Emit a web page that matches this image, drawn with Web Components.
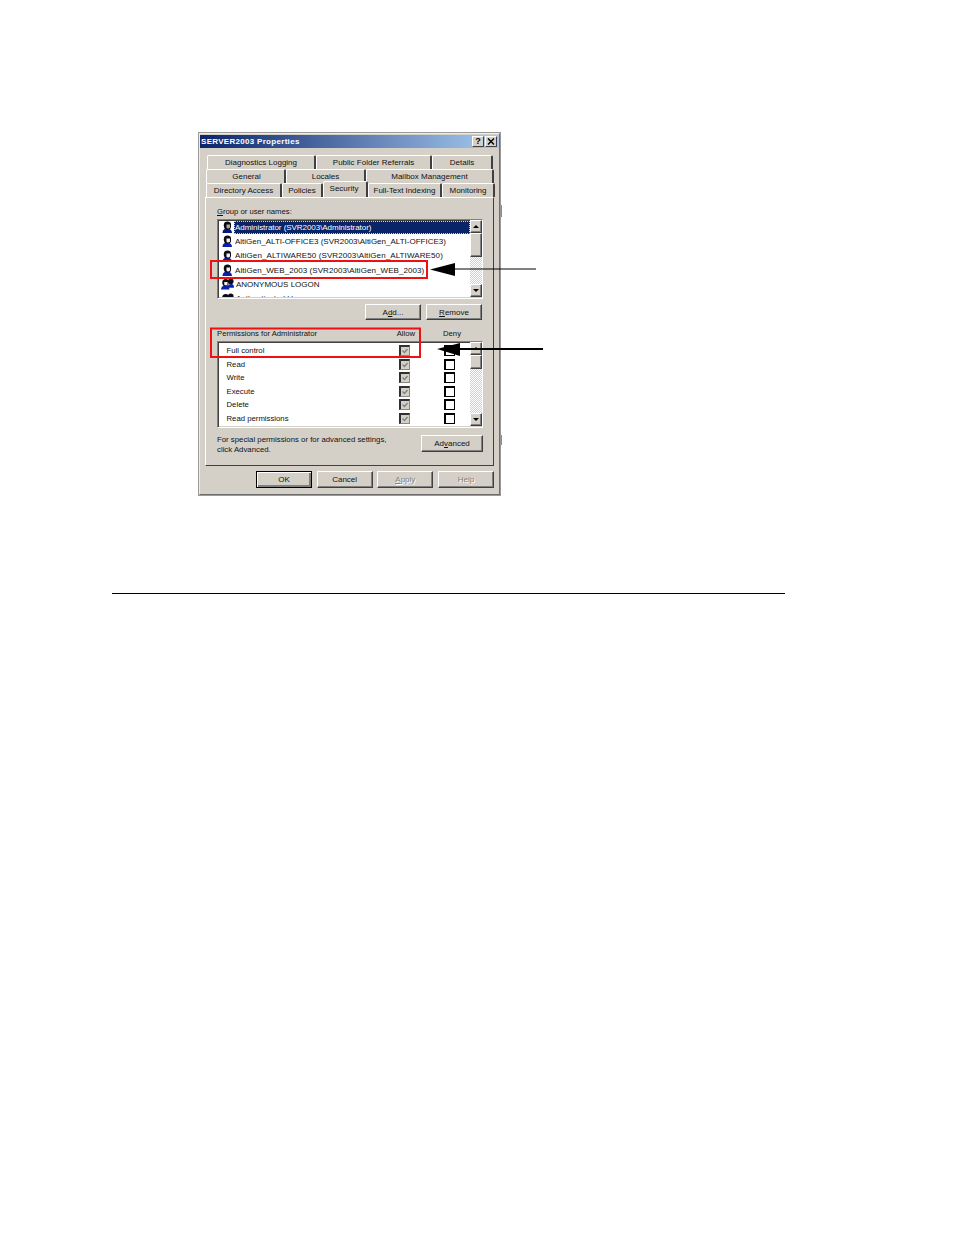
<!DOCTYPE html>
<html>
<head>
<meta charset="utf-8">
<title>SERVER2003 Properties</title>
<style>
  html, body { margin: 0; background: #fff; }
  body { font-family: "Liberation Sans", Arial, sans-serif; }
</style>
</head>
<body>

<template id="user-icon">
  <style>:host { display: inline-block; width: 11px; height: 12px; flex: none; } svg { display: block; }</style>
  <svg width="11" height="12" viewBox="0 0 11 12">
    <path d="M0.500 12 C0.500 9 2 7.500 5 7.500 C8 7.500 10 9 10 12 Z" fill="#0a1fb0"/>
    <path d="M2.500 1.500 C4.500 -0.300 9 0 9 3 L9 6 C9 8 7 8.500 6 8.500 L3 8 C1.500 6 1.500 3 2.500 1.500 Z" fill="#0c0c14"/>
    <path d="M4.500 3.500 L8 3.500 L8 6.500 C7 8 5 7.600 4.500 6.500 Z" fill="#f4f0e8"/>
  </svg>
</template>

<template id="group-icon">
  <style>:host { display: inline-block; width: 13px; height: 12px; flex: none; margin-left: -1px; } svg { display: block; }</style>
  <svg width="13" height="12" viewBox="0 0 14 12">
    <path d="M7 10 C7 7 9 6 11 6 C13 6 14 7 14 10 Z" fill="#0a1fb0"/>
    <circle cx="10.500" cy="3.200" r="3" fill="#0c0c14"/>
    <path d="M0 12 C0 9 2 7.500 5 7.500 C8 7.500 9 9 9 12 Z" fill="#0a1fb0"/>
    <path d="M2 2 C4 0 8 0 8 3 L8 6 C8 8 6 8.500 5 8.500 L2.500 8 C1 6 1 3.500 2 2 Z" fill="#0c0c14"/>
    <path d="M3.500 3.800 L7 3.800 L7 6.500 C6 8 4 7.600 3.500 6.500 Z" fill="#f4f0e8"/>
  </svg>
</template>

<template id="win-button">
  <style>
    :host {
      display: inline-flex; align-items: center; justify-content: center;
      box-sizing: border-box; height: 17px; background: #d4d0c8; color: #111;
      font-size: 8px;
      border: 1px solid; border-color: #fff #404040 #404040 #fff;
      box-shadow: inset -1px -1px 0 #808080;
    }
    :host([default]) { border-color: #000; box-shadow: inset 1px 1px 0 #fff, inset -2px -2px 0 #808080; }
    :host([disabled]) { color: #808080; text-shadow: 1px 1px 0 #fff; }
    u { text-decoration-thickness: 1px; }
  </style>
  <slot></slot>
</template>

<template id="win-scrollbar">
  <style>
    :host {
      display: flex; flex-direction: column; width: 12px; flex: none; box-sizing: border-box;
      background-color: #fff;
      background-image: conic-gradient(#d4d0c8 25%, #fff 0 50%, #d4d0c8 0 75%, #fff 0);
      background-size: 2px 2px;
    }
    .btn, .thumb {
      box-sizing: border-box; background: #d4d0c8; flex: none;
      border: 1px solid; border-color: #fff #404040 #404040 #fff;
      box-shadow: inset -1px -1px 0 #808080;
    }
    .btn { height: 13px; display: flex; align-items: center; justify-content: center; }
    .thumb { height: var(--thumb, 24px); }
    .track { flex: 1; }
    .up, .down { width: 0; height: 0; border: 3px solid transparent; }
    .up { border-bottom: 3px solid #000; border-top-width: 0; }
    .down { border-top: 3px solid #000; border-bottom-width: 0; }
  </style>
  <div class="btn"><div class="up"></div></div>
  <div class="thumb"></div>
  <div class="track"></div>
  <div class="btn"><div class="down"></div></div>
</template>

<template id="win-listbox">
  <style>
    :host {
      display: flex; box-sizing: border-box; background: #fff;
      border: 1px solid; border-color: #808080 #fff #fff #808080;
      box-shadow: inset 1px 1px 0 #404040, inset -1px -1px 0 #d4d0c8;
      padding: 0 0 1px 2px;
    }
    .rows { flex: 1; min-width: 0; overflow: hidden; padding-top: var(--rows-top, 0); }
  </style>
  <div class="rows"><slot></slot></div>
  <slot name="bar"></slot>
</template>

<template id="user-row">
  <style>
    :host { display: flex; align-items: center; height: 14.300px; padding-left: 2px; font-size: 8px; white-space: nowrap; color: #111; }
    .text { margin-left: 1px; padding: 0 1px; height: 13px; line-height: 13px; flex: none; }
    :host([selected]) .text { flex: 1; background: #0a246a; color: #fff; outline: 1px dotted #d4d0c8; outline-offset: -1px; }
    :host([selected]) ::slotted([slot=icon]) { filter: brightness(0.7); }
  </style>
  <slot name="icon"></slot>
  <span class="text"><slot></slot></span>
</template>

<template id="perm-row">
  <style>
    :host {
      display: grid; grid-template-columns: 1fr 11px 11px; column-gap: 34px; align-items: center;
      height: 13.500px; padding: 0 15px 0 6.500px; font-size: 7.750px; color: #111;
    }
    .box { box-sizing: border-box; width: 11px; height: 11px; display: block; background: #fff; }
    .box.allow { background: #d4d0c8; border: 2px solid; border-color: #303030 #888 #888 #303030; border-right-width: 1px; border-bottom-width: 1px; }
    .box.allow svg { display: block; }
    .box.deny { border: 2px solid #000; border-right-width: 1px; border-bottom-width: 1px; }
  </style>
  <span><slot></slot></span>
  <span class="box allow"><svg width="8" height="8" viewBox="0 0 8 8"><path d="M1.500 3.500 L3.500 5.500 L6.500 2" fill="none" stroke="#808080" stroke-width="1.300"/></svg></span>
  <span class="box deny"></span>
</template>

<template id="win-tab">
  <style>
    :host {
      display: flex; align-items: center; justify-content: center; box-sizing: border-box;
      height: 14px; padding-bottom: 1px; font-size: 8px; background: #d4d0c8; color: #111; white-space: nowrap;
      border-top: 1px solid #fff; border-left: 1px solid #fff; border-right: 2px solid #404040;
      border-top-left-radius: 2px; border-top-right-radius: 2px;
    }
    :host([active]) { height: 16px; margin-top: -2px; margin-bottom: -1px; position: relative; z-index: 1; padding-bottom: 3px; }
  </style>
  <slot></slot>
</template>

<template id="tab-row">
  <style>
    :host { display: flex; height: 14px; box-sizing: border-box; padding-left: var(--indent, 1px); }
    ::slotted(*) { flex: none; }
  </style>
  <slot></slot>
</template>

<template id="title-bar">
  <style>
    :host {
      display: flex; align-items: center; height: 13px; padding: 0 2px 0 1px;
      background: linear-gradient(90deg, #0a246a, #a6caf0);
      color: #fff; font-size: 8px; font-weight: 700; letter-spacing: 0.300px;
    }
    .t { flex: 1; }
    .b {
      box-sizing: border-box; width: 12px; height: 11px; background: #d4d0c8;
      color: #000; font-size: 9px; line-height: 9px; text-align: center; letter-spacing: 0;
      border: 1px solid; border-color: #fff #404040 #404040 #fff;
      display: flex; align-items: center; justify-content: center;
    }
    .close { margin-left: 1px; }
    svg { display: block; }
  </style>
  <span class="t"><slot></slot></span>
  <span class="b">?</span>
  <span class="b close"><svg width="8" height="7" viewBox="0 0 8 7"><path d="M1 0.500 L7 6.500 M7 0.500 L1 6.500" stroke="#000" stroke-width="1.400"/></svg></span>
</template>

<template id="props-dialog">
  <style>
    :host {
      display: block; box-sizing: border-box; width: 303px; height: 364px;
      background: #d4d0c8; padding: 1px 0 0;
      border: 2px solid; border-color: #eeece6 #6e6e6e #6e6e6e #eeece6;
      outline: 1px solid #9a9a9a; outline-offset: -1px;
      color: #111;
    }
    .tabs { margin: 7px 5px 0; }
    .panel {
      box-sizing: border-box; margin: 0 5px; height: 269px; padding: 7px 10px 0 11px;
      border: 1px solid; border-color: #fff #404040 #404040 #fff;
    }
    .label { height: 14px; font-size: 7.700px; line-height: 13px; }
    .users { height: 80px; --thumb: 24px; }
    .pair { display: flex; justify-content: flex-end; gap: 5px; margin: 5px 1px 0 0; height: 16px; }
    .pair ::slotted(*) { height: 16px; width: 56px; }
    .perm-head { display: flex; margin-top: 7px; height: 14px; font-size: 7.700px; line-height: 13px; }
    .perm-head span:first-child { flex: 1; }
    .perm-head .allow { margin-right: 28px; }
    .perm-head .deny { margin-right: 22px; }
    .perms { height: 87px; --thumb: 14px; --rows-top: 2px; }
    .foot { display: flex; justify-content: space-between; margin-top: 7px; font-size: 7.800px; line-height: 10px; }
    .foot p { margin: 0; }
    .buttons { display: flex; justify-content: flex-end; gap: 4.700px; margin: 5px 5px 0 0; }
    ::slotted([slot=buttons]) { width: 56px; }
  </style>
  <slot name="title"></slot>
  <div class="tabs"><slot name="tabs"></slot></div>
  <div class="panel">
    <div class="label"><u>G</u>roup or user names:</div>
    <div class="users"><slot name="users"></slot></div>
    <div class="pair"><slot name="pair"></slot></div>
    <div class="perm-head"><span>Permissions for Administrator</span><span class="allow">Allow</span><span class="deny">Deny</span></div>
    <div class="perms"><slot name="perms"></slot></div>
    <div class="foot">
      <p>For special permissions or for advanced settings,<br>click Advanced.</p>
      <slot name="advanced"></slot>
    </div>
  </div>
  <div class="buttons"><slot name="buttons"></slot></div>
</template>

<template id="doc-figure">
  <style>
    :host { display: block; position: relative; width: 303px; margin-left: 198px; }
    svg { position: absolute; left: 0; top: 0; overflow: visible; pointer-events: none; z-index: 5; }
  </style>
  <slot></slot>
  <svg width="360" height="240" viewBox="198 132 360 240">
    <rect x="211" y="261" width="216" height="17" fill="none" stroke="#ee1111" stroke-width="2"/>
    <rect x="211" y="328.500" width="209" height="28.500" fill="none" stroke="#ee1111" stroke-width="2"/>
    <path d="M452 269 H536" stroke="#000" stroke-width="1"/>
    <path d="M430 269.500 L455 263 L455 276 Z" fill="#000"/>
    <path d="M458 349 H543" stroke="#000" stroke-width="2"/>
    <path d="M437 349 L460 343 L460 356 Z" fill="#000"/>
    <path d="M501.500 205 V217 M501.500 435 V445" stroke="#8a8a8a" stroke-width="1"/>
  </svg>
</template>

<template id="doc-page">
  <style>
    :host { display: block; box-sizing: border-box; width: 954px; height: 1235px; padding-top: 132px; background: #fff; overflow: hidden; }
    .rule { height: 1px; background: #000; width: 673px; margin: 97px 0 0 112px; }
  </style>
  <slot></slot>
  <div class="rule"></div>
</template>

<doc-page>
  <doc-figure>
    <props-dialog>
      <title-bar slot="title">SERVER2003 Properties</title-bar>

      <tab-row slot="tabs" style="--indent:2px">
        <win-tab style="width:109px">Diagnostics Logging</win-tab>
        <win-tab style="width:116px">Public Folder Referrals</win-tab>
        <win-tab style="width:61px">Details</win-tab>
      </tab-row>
      <tab-row slot="tabs">
        <win-tab style="width:80px;padding-left:2px">General</win-tab>
        <win-tab style="width:80px">Locales</win-tab>
        <win-tab style="width:128px">Mailbox Management</win-tab>
      </tab-row>
      <tab-row slot="tabs">
        <win-tab style="width:76px">Directory Access</win-tab>
        <win-tab style="width:41px">Policies</win-tab>
        <win-tab style="width:45px;padding-right:2px" active>Security</win-tab>
        <win-tab style="width:74px;letter-spacing:-0.05px">Full-Text Indexing</win-tab>
        <win-tab style="width:53px;letter-spacing:-0.05px">Monitoring</win-tab>
      </tab-row>

      <win-listbox slot="users" style="height:100%">
        <user-row selected style="letter-spacing:-0.050px"><user-icon slot="icon"></user-icon>Administrator (SVR2003\Administrator)</user-row>
        <user-row><user-icon slot="icon"></user-icon>AltiGen_ALTI-OFFICE3 (SVR2003\AltiGen_ALTI-OFFICE3)</user-row>
        <user-row style="letter-spacing:0.100px"><user-icon slot="icon"></user-icon>AltiGen_ALTIWARE50 (SVR2003\AltiGen_ALTIWARE50)</user-row>
        <user-row style="letter-spacing:0.070px"><user-icon slot="icon"></user-icon>AltiGen_WEB_2003 (SVR2003\AltiGen_WEB_2003)</user-row>
        <user-row><group-icon slot="icon"></group-icon>ANONYMOUS LOGON</user-row>
        <user-row><group-icon slot="icon"></group-icon>Authenticated Users</user-row>
        <win-scrollbar slot="bar"></win-scrollbar>
      </win-listbox>

      <win-button slot="pair">A<u>d</u>d...</win-button>
      <win-button slot="pair"><u>R</u>emove</win-button>

      <win-listbox slot="perms" style="height:100%">
        <perm-row>Full control</perm-row>
        <perm-row>Read</perm-row>
        <perm-row>Write</perm-row>
        <perm-row>Execute</perm-row>
        <perm-row>Delete</perm-row>
        <perm-row>Read permissions</perm-row>
        <win-scrollbar slot="bar"></win-scrollbar>
      </win-listbox>

      <win-button slot="advanced" style="width:62px">Ad<u>v</u>anced</win-button>

      <win-button slot="buttons" default>OK</win-button>
      <win-button slot="buttons">Cancel</win-button>
      <win-button slot="buttons" disabled><u>A</u>pply</win-button>
      <win-button slot="buttons" disabled>Help</win-button>
    </props-dialog>
  </doc-figure>
</doc-page>

<script>
  // every element just clones its template into an open shadow root
  const names = ["user-icon", "group-icon", "win-button", "win-scrollbar", "win-listbox", "user-row",
    "perm-row", "win-tab", "tab-row", "title-bar", "props-dialog", "doc-figure", "doc-page"];
  names.forEach((name) => {
    customElements.define(name, class extends HTMLElement {
      constructor() {
        super();
        this.attachShadow({ mode: "open" });
        this.shadowRoot.appendChild(document.getElementById(name).content.cloneNode(true));
      }
    });
  });
</script>
</body>
</html>
